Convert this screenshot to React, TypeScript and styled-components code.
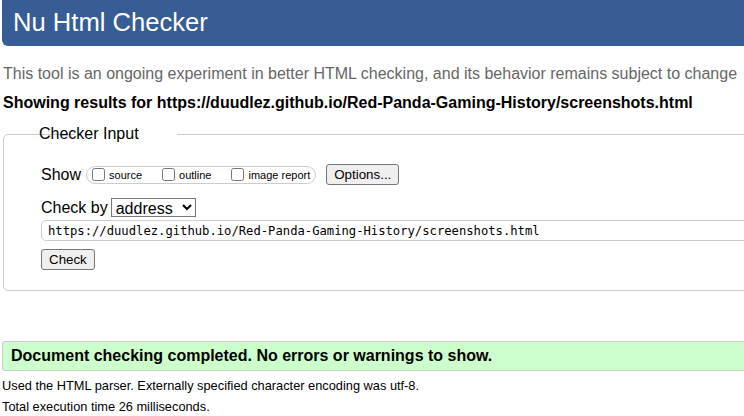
import React from "react";
import styled, { createGlobalStyle } from "styled-components";

const Global = createGlobalStyle`
  html, body {
    margin: 0;
    padding: 0;
    background: #ffffff;
    font-family: "Liberation Sans", Arial, sans-serif;
    color: #000;
  }
`;

const Page = styled.div`
  width: 744px;
  height: 416px;
  overflow: hidden;
`;

const Header = styled.header`
  margin-left: 2px;
  height: 46px;
  background: #365d95;
  border-radius: 0 0 0 6px;
  display: flex;
  align-items: center;
  padding-left: 11px;
`;

const Title = styled.h1`
  margin: 0;
  font-size: 25.6px;
  font-weight: normal;
  color: #ffffff;
  line-height: 1;
`;

const Intro = styled.p`
  margin: 18px 0 0 3px;
  font-size: 16px;
  line-height: 20px;
  color: #666666;
  white-space: nowrap;
`;

const Results = styled.p`
  margin: 9px 0 0 3px;
  font-size: 16px;
  line-height: 20px;
  font-weight: bold;
  white-space: nowrap;
`;

const Fieldset = styled.fieldset`
  margin: 12px -40px 0 3px;
  padding: 8px 0 20px 37px;
  border: 1px solid #cccccc;
  border-radius: 5px;
  min-width: 0;
`;

const Legend = styled.legend`
  font-size: 16px;
  padding: 0 1px;
  margin-left: 34px;
  position: relative;
  left: -37px;
`;

const Row = styled.div<{ $gap?: number }>`
  display: flex;
  align-items: center;
  margin-top: ${(p) => p.$gap ?? 0}px;
  white-space: nowrap;
`;

const Label = styled.span<{ $space?: number }>`
  font-size: 16px;
  margin-right: ${(p) => p.$space ?? 4}px;
`;

const Group = styled.span`
  display: inline-flex;
  align-items: center;
  height: 16px;
  border: 1px solid #cccccc;
  border-radius: 9px;
  padding: 0 5px 0 5px;
`;

const Check = styled.input.attrs({ type: "checkbox" })`
  width: 13px;
  height: 13px;
  margin: 0 4px 0 0;
`;

const Small = styled.span<{ $space?: number }>`
  font-size: 11px;
  margin-right: ${(p) => p.$space ?? 0}px;
`;

const Button = styled.button<{ $left?: number }>`
  font-family: "Liberation Sans", Arial, sans-serif;
  font-size: 13.33px;
  height: 21px;
  padding: 0 7px;
  margin-left: ${(p) => p.$left ?? 0}px;
  border: 1px solid #767676;
  border-radius: 3px;
  background: #efefef;
  color: #000;
`;

const Select = styled.select`
  font-family: "Liberation Sans", Arial, sans-serif;
  font-size: 16px;
  width: 85px;
  height: 19px;
  padding: 0;
  border: 1px solid #767676;
  border-radius: 0;
  background: #fff;
`;

const UrlInput = styled.input`
  width: 760px;
  height: 21px;
  box-sizing: border-box;
  border: 1px solid #cccccc;
  border-radius: 5px;
  padding: 0 6px;
  font-family: "DejaVu Sans Mono", "Liberation Mono", monospace;
  font-size: 12.2px;
  color: #000;
`;

const Success = styled.div`
  margin: 50px 0 0 2px;
  height: 28px;
  background: #ccffcc;
  border: 1px solid #cccccc;
  border-right: none;
  border-radius: 3px 0 0 3px;
  display: flex;
  align-items: center;
  padding-left: 8px;
  font-size: 16px;
  font-weight: bold;
  white-space: nowrap;
`;

const Details = styled.p<{ $top: number }>`
  margin: ${(p) => p.$top}px 0 0 2px;
  font-size: 12.8px;
  line-height: 15px;
  white-space: nowrap;
`;

export default function App(): JSX.Element {
  return (
    <Page>
      <Global />
      <Header>
        <Title>Nu Html Checker</Title>
      </Header>
      <Intro>
        This tool is an ongoing experiment in better HTML checking, and its behavior remains subject to change
      </Intro>
      <Results>Showing results for https://duudlez.github.io/Red-Panda-Gaming-History/screenshots.html</Results>
      <Fieldset>
        <Legend>Checker Input</Legend>
        <Row $gap={13}>
          <Label $space={5}>Show</Label>
          <Group>
            <Check />
            <Small $space={20}>source</Small>
            <Check />
            <Small $space={20}>outline</Small>
            <Check />
            <Small>image report</Small>
          </Group>
          <Button $left={10}>Options...</Button>
        </Row>
        <Row $gap={13}>
          <Label $space={3}>Check by</Label>
          <Select defaultValue="address">
            <option value="address">address</option>
            <option value="file">file upload</option>
            <option value="text">text input</option>
          </Select>
        </Row>
        <Row $gap={3}>
          <UrlInput readOnly value="https://duudlez.github.io/Red-Panda-Gaming-History/screenshots.html" />
        </Row>
        <Row $gap={8}>
          <Button>Check</Button>
        </Row>
      </Fieldset>
      <Success>Document checking completed. No errors or warnings to show.</Success>
      <Details $top={7}>Used the HTML parser. Externally specified character encoding was utf-8.</Details>
      <Details $top={6}>Total execution time 26 milliseconds.</Details>
    </Page>
  );
}
